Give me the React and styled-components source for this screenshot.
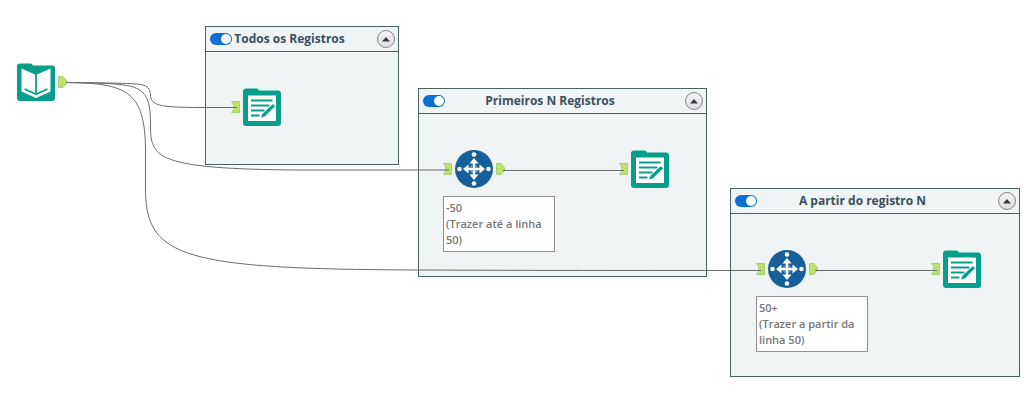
import React, { useState } from "react";
import styled, { createGlobalStyle } from "styled-components";

const GlobalStyle = createGlobalStyle`
  body {
    margin: 0;
    background-color: #ffffff;
  }
`;

const containers = [
  { id: "todos", title: "Todos os Registros", x: 205, y: 26, w: 194, h: 139 },
  { id: "primeiros", title: "Primeiros N Registros", x: 418, y: 88, w: 289, h: 189 },
  { id: "partir", title: "A partir do registro N", x: 730, y: 188, w: 290, h: 189 },
];

const tools = [
  { id: "input", Icon: BookIcon, x: 17, y: 63, output: true },
  { id: "browse1", Icon: SheetIcon, x: 231, y: 88, input: true },
  { id: "select1", Icon: SampleIcon, x: 443, y: 150, input: true, output: true },
  { id: "browse2", Icon: SheetIcon, x: 619, y: 150, input: true },
  { id: "select2", Icon: SampleIcon, x: 756, y: 250, input: true, output: true },
  { id: "browse3", Icon: SheetIcon, x: 931, y: 250, input: true },
];

const notes = [
  { id: "n1", x: 443, y: 196, lines: ["-50", "(Trazer até a linha 50)"] },
  { id: "n2", x: 756, y: 296, lines: ["50+", "(Trazer a partir da linha 50)"] },
];

const wires = [
  "M66 82.5 C110 83 135 83 143 85 C150 87 150 91 150.500 95 C151 105 158 107.500 200 107.500 H237",
  "M66 82.5 C110 83 129 84 138 89 C148 95 150.500 104 150.500 125 C150.500 158 155 169 300 170 H449",
  "M66 82.5 C128 83 145 92 145.500 150 V190 C146 258 185 269 417 270 C560 270.500 600 270.500 761 270.500",
  "M503 170.500 H624",
  "M815 270.500 H937",
];

function BookIcon() {
  return (
    <Glyph viewBox="0 0 38 38" aria-hidden="true">
      <path
        fill="#089e8c"
        d="M3 0.500H13.500Q15 0.500 16 2.500H35Q38 2.500 38 5.500V35Q38 38 35 38H3Q0 38 0 35V3.500Q0 0.500 3 0.500Z"
      />
      <path fill="#fff" d="M4.500 5.500L19 12L33.500 5.500V28.500L19 35L4.500 28.500Z" />
      <path
        fill="none"
        stroke="#089e8c"
        strokeWidth="1.800"
        d="M19 11V30M7.500 26L19 31.300L30.500 26"
      />
    </Glyph>
  );
}

function SheetIcon() {
  return (
    <Glyph viewBox="0 0 38 38" aria-hidden="true">
      <path
        fill="#089e8c"
        d="M3 0.500H13.500Q15 0.500 16 2.500H35Q38 2.500 38 5.500V35Q38 38 35 38H3Q0 38 0 35V3.500Q0 0.500 3 0.500Z"
      />
      <path fill="#fff" d="M5 7.500H33V33H5Z" />
      <path
        fill="none"
        stroke="#089e8c"
        strokeWidth="2.200"
        d="M8 12.500H29.500M8 17.500H26.500M8 22.500H21.500M8 27.500H16.500"
      />
      <path fill="#089e8c" d="M30 16L32 18.200L22 28.200L18 29.500L19.500 25.800Z" />
    </Glyph>
  );
}

function SampleIcon() {
  return (
    <Glyph viewBox="0 0 38 38" aria-hidden="true">
      <circle cx="19" cy="19" r="19" fill="#175f9a" />
      <g fill="#fff">
        <circle cx="19" cy="4.500" r="2.300" />
        <circle cx="19" cy="33.500" r="2.300" />
        <circle cx="4.500" cy="19" r="2.300" />
        <circle cx="33.500" cy="19" r="2.300" />
        <path d="M19 8L23.500 13.500H14.500ZM19 30L23.500 24.500H14.500ZM8 19L13.500 14.500V23.500ZM30 19L24.500 14.500V23.500Z" />
      </g>
      <path stroke="#fff" strokeWidth="2.400" d="M19 12V26M12 19H26" />
      <path fill="none" stroke="#fff" strokeWidth="0.800" strokeOpacity="0.500" d="M16 16H22V22H16Z" />
    </Glyph>
  );
}

const InputPort = () => (
  <Port viewBox="0 0 9 12" aria-hidden="true">
    <path d="M0.500 0.500H8.500V11.500H0.500L2.500 8.500V3.500Z" />
  </Port>
);

const OutputPort = () => (
  <Port viewBox="0 0 9 12" aria-hidden="true">
    <path d="M0.500 0.500H5L8.500 4.500V7.500L5 11.500H0.500Z" />
  </Port>
);

const ToolContainer = ({ item }) => {
  const [enabled, setEnabled] = useState(true);
  const [open, setOpen] = useState(true);

  return (
    <Panel $x={item.x} $y={item.y} $w={item.w} $h={open ? item.h : 26}>
      <PanelHeader>
        <Toggle
          type="checkbox"
          role="switch"
          aria-label={item.title}
          checked={enabled}
          onChange={(e) => setEnabled(e.target.checked)}
        />
        <PanelTitle>{item.title}</PanelTitle>
        <CollapseButton
          type="button"
          aria-label={open ? "Recolher" : "Expandir"}
          onClick={() => setOpen(!open)}
        >
          <Arrow viewBox="0 0 8 5" $open={open}>
            <path d="M4 0L8 4.500H0Z" />
          </Arrow>
        </CollapseButton>
      </PanelHeader>
    </Panel>
  );
};

const App = () => {
  return (
    <>
      <GlobalStyle />
      <Canvas>
        {containers.map((item) => (
          <ToolContainer key={item.id} item={item} />
        ))}
        {tools.map(({ id, Icon, x, y, input, output }) => (
          <Tool key={id} $x={x} $y={y}>
            {input && <InputPort />}
            <Icon />
            {output && <OutputPort />}
          </Tool>
        ))}
        {notes.map((note) => (
          <Note key={note.id} $x={note.x} $y={note.y}>
            {note.lines.map((line) => (
              <NoteLine key={line}>{line}</NoteLine>
            ))}
          </Note>
        ))}
        <Wires aria-hidden="true">
          {wires.map((d) => (
            <path key={d} d={d} />
          ))}
        </Wires>
      </Canvas>
    </>
  );
};

const Canvas = styled.main`
  position: relative;
  min-height: 100vh;
  overflow: hidden;
  background-color: #ffffff;
  font-family: "Open Sans", "Noto Sans", sans-serif;
`;

// everything on the canvas is placed by its own coordinates
const CanvasItem = styled.div`
  position: absolute;
  left: ${({ $x }) => $x}px;
  top: ${({ $y }) => $y}px;
`;

const Panel = styled(CanvasItem).attrs({ as: "section" })`
  box-sizing: border-box;
  width: ${({ $w }) => $w}px;
  height: ${({ $h }) => $h}px;
  border: 1px solid #48625f;
  background-color: #f0f4f5;
  overflow: hidden;
`;

const PanelHeader = styled.header`
  display: flex;
  align-items: center;
  box-sizing: border-box;
  height: 25px;
  padding: 0 3px 0 4px;
  border-bottom: 1px solid #48625f;
`;

const PanelTitle = styled.h2`
  flex: 1;
  margin: 0;
  padding-right: 30px;
  color: #3c4f5c;
  font-size: 12px;
  font-weight: 700;
  line-height: 16px;
  text-align: center;
  white-space: nowrap;
`;

const Toggle = styled.input`
  appearance: none;
  flex: none;
  display: flex;
  align-items: center;
  box-sizing: border-box;
  width: 22px;
  height: 12px;
  margin: 0;
  padding: 1px;
  border-radius: 6px;
  background-color: #93a3ad;
  cursor: pointer;

  &::before {
    content: "";
    width: 10px;
    height: 10px;
    border-radius: 50%;
    background-color: #ffffff;
  }

  &:checked {
    justify-content: flex-end;
    background-color: #0b6fd6;
  }
`;

const CollapseButton = styled.button`
  flex: none;
  display: flex;
  align-items: center;
  justify-content: center;
  width: 18px;
  height: 18px;
  padding: 0;
  border: 1px solid #858585;
  border-radius: 50%;
  background: linear-gradient(#f7f7f9, #dcdce2);
  cursor: pointer;
`;

const Arrow = styled.svg`
  width: 8px;
  height: 5px;
  fill: #3a3a3a;
  transform: ${({ $open }) => ($open ? "none" : "rotate(180deg)")};
`;

const Tool = styled(CanvasItem)`
  display: flex;
  align-items: center;
  gap: 3px;
`;

const Glyph = styled.svg`
  width: 38px;
  height: 38px;
`;

const Port = styled.svg`
  width: 9px;
  height: 12px;
  fill: #bde268;
  stroke: #a9cf74;
`;

const Note = styled(CanvasItem)`
  box-sizing: border-box;
  width: 112px;
  padding: 3px 2px;
  border: 1px solid #8f8f8f;
  background-color: #ffffff;
`;

const NoteLine = styled.p`
  margin: 0;
  color: #777777;
  font-size: 11px;
  font-weight: 600;
  line-height: 16px;
`;

const Wires = styled.svg`
  position: absolute;
  inset: 0;
  width: 100%;
  height: 100%;
  fill: none;
  stroke: #6b6b6b;
  stroke-width: 1px;
  pointer-events: none;
`;

export default App;
